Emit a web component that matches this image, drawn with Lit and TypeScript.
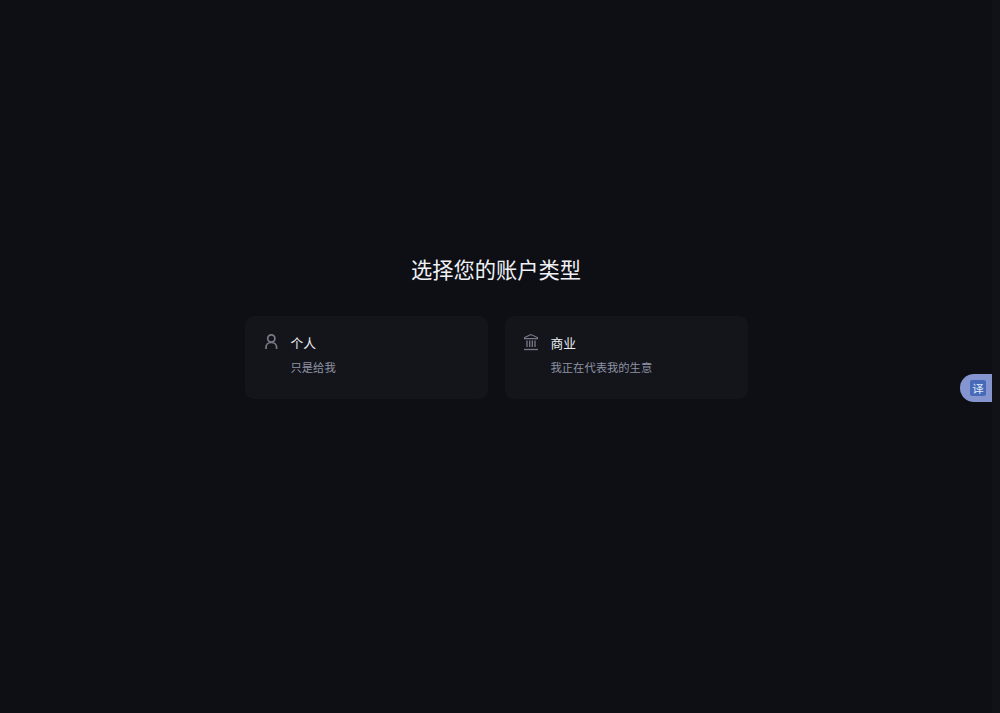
import { LitElement, html, css } from "lit";
import { customElement } from "lit/decorators.js";

@customElement("app-root")
export class AppRoot extends LitElement {
  static styles = css`
    :host {
      display: flex;
      height: 713px;
      background: #0e0f15;
      font-family: "Noto Sans CJK SC", "Liberation Sans", sans-serif;
      overflow: hidden;
    }
    .page {
      position: relative;
      flex: 1;
      min-width: 0;
      display: flex;
      flex-direction: column;
      align-items: center;
      padding-top: 254px;
      box-sizing: border-box;
    }
    .scroll {
      width: 8px;
      background: #111218;
    }
    h1 {
      margin: 0;
      font-size: 21.25px;
      line-height: 30px;
      font-weight: 400;
      color: #eff1f5;
      text-align: center;
    }
    .cards {
      display: flex;
      gap: 17px;
      margin-top: 32px;
    }
    .card {
      width: 243px;
      height: 83px;
      box-sizing: border-box;
      background: #13151b;
      border-radius: 9px;
      padding: 17px 18px;
      display: flex;
      gap: 12px;
    }
    .icon {
      width: 16px;
      height: 18px;
      flex: none;
      color: #787a89;
    }
    .icon svg {
      display: block;
      width: 16px;
      height: 18px;
    }
    .t {
      font-size: 12.75px;
      line-height: 20px;
      color: #eceef2;
      font-weight: 400;
    }
    .s {
      font-size: 11.3px;
      line-height: 16px;
      color: #8e92a4;
      margin-top: 6px;
    }
    .tr {
      position: absolute;
      right: 0;
      top: 374px;
      width: 32px;
      height: 28px;
      background: #8595d0;
      border-radius: 14px 0 0 14px;
      display: flex;
      align-items: center;
      justify-content: flex-start;
      padding-left: 10px;
      box-sizing: border-box;
    }
    .tr span {
      width: 16px;
      height: 16px;
      background: #4669b8;
      border-radius: 2px;
      color: #dfe6f7;
      font-size: 11.5px;
      line-height: 16px;
      text-align: center;
    }
  `;

  render() {
    return html`
      <div class="page">
        <h1>选择您的账户类型</h1>
        <div class="cards">
          <div class="card">
            <div class="icon">
              <svg viewBox="0 0 16 18" fill="none" stroke="currentColor" stroke-width="1.7">
                <circle cx="8.3" cy="5.5" r="3.6"></circle>
                <path d="M3 16v-1.5c0-2.8 2.2-5 5.3-5s5.3 2.2 5.3 5V16"></path>
              </svg>
            </div>
            <div>
              <div class="t">个人</div>
              <div class="s">只是给我</div>
            </div>
          </div>
          <div class="card">
            <div class="icon">
              <svg viewBox="0 0 16 18" fill="none" stroke="currentColor" stroke-width="1.1">
                <path d="M8 1.5L1.5 4.6v1h13v-1z"></path>
                <path d="M4 7.5v6.5M6.7 7.5v6.5M9.3 7.5v6.5M12 7.5v6.5" stroke-width="1.3"></path>
                <path d="M1 16.5h14" stroke-width="1.3"></path>
              </svg>
            </div>
            <div>
              <div class="t">商业</div>
              <div class="s">我正在代表我的生意</div>
            </div>
          </div>
        </div>
        <div class="tr"><span>译</span></div>
      </div>
      <div class="scroll"></div>
    `;
  }
}
